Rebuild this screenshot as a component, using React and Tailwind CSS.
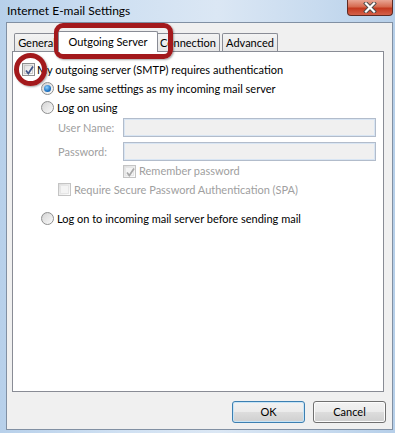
import React from "react";

const font = { fontFamily: 'Lato, "Noto Sans", "Liberation Sans", sans-serif' };

function Checkbox({ checked = false, disabled = false }) {
  return (
    <span
      className={`relative flex h-[13px] w-[13px] shrink-0 items-center justify-center border ${
        disabled ? "border-[#c4c4c4]" : "border-[#8e8f8f]"
      } bg-[linear-gradient(135deg,#dcdcdc,#ffffff)]`}
    >
      <span className={`h-[9px] w-[9px] border ${disabled ? "border-[#e6e6e6] bg-[#f4f4f4]" : "border-[#c9c9c9] bg-[linear-gradient(135deg,#e1e1e1,#fafafa)]"}`} />
      {checked && (
        <svg className="absolute left-[1px] top-[1px]" width="11" height="11" viewBox="0 0 11 11">
          <path
            d="M2 5.5 L4.3 8.5 L9 1.5"
            fill="none"
            stroke={disabled ? "#a8a8a8" : "#3f5488"}
            strokeWidth="1.7"
          />
        </svg>
      )}
    </span>
  );
}

function Radio({ checked = false }) {
  return (
    <span className="relative flex h-[13px] w-[13px] shrink-0 items-center justify-center rounded-full border border-[#8e8f8f] bg-[linear-gradient(135deg,#cfcfcf,#ffffff)]">
      {checked ? (
        <span className="h-[7px] w-[7px] rounded-full bg-[radial-gradient(circle_at_40%_35%,#8fd3ff,#1f74c4_60%,#0f4c8f)]" />
      ) : (
        <span className="h-[9px] w-[9px] rounded-full bg-[linear-gradient(135deg,#d8d8d8,#f6f6f6)]" />
      )}
    </span>
  );
}

function Field() {
  return (
    <div className="h-[19px] w-[253px] shrink-0 border border-[#b2bccb] bg-[#f0f0f0] shadow-[inset_0_0_0_1px_#d8e5f3]" />
  );
}

function Tab({ label, selected = false, w }) {
  if (selected) {
    return (
      <div
        className={`relative z-10 -mx-[2px] -mb-[1px] flex h-[21px] ${w} items-start justify-center whitespace-nowrap rounded-t-[2px] border border-b-0 border-[#898c95] bg-white pt-[3px] text-black`}
      >
        {label}
      </div>
    );
  }
  return (
    <div
      className={`flex h-[18px] ${w} items-start justify-center whitespace-nowrap rounded-t-[2px] border border-b-0 border-[#898c95] bg-[linear-gradient(#f3f3f3,#e6e6e6)] pt-[2px] text-black`}
    >
      {label}
    </div>
  );
}

function Button({ children, focused = false }) {
  return (
    <div
      className={`flex h-[22px] w-[73px] items-center justify-center rounded-[3px] border ${
        focused ? "border-[#3c7fb1] shadow-[inset_0_0_0_1px_#c6e4f7]" : "border-[#707070] shadow-[inset_0_0_0_1px_#fcfcfc]"
      } bg-[linear-gradient(#f2f2f2_0%,#ebebeb_50%,#dddddd_51%,#cfcfcf_100%)] text-black`}
    >
      {children}
    </div>
  );
}

export default function App() {
  return (
    <div
      className="relative h-[433px] w-[395px] overflow-hidden bg-[linear-gradient(90deg,#b7d0ea_0%,#cfe0f2_30%,#dbe7f4_55%,#c8dbef_80%,#b6cfe9_100%)] text-[11px] leading-[14px]"
      style={font}
    >
      {/* title bar */}
      <div className="flex h-[22px] items-center pl-[7px] text-[12px] text-black">Internet E-mail Settings</div>

      {/* close button */}
      <div className="absolute right-[2px] top-0 flex h-[16px] w-[46px] items-center justify-center rounded-b-[4px] border border-t-0 border-[#5f2a22] bg-[linear-gradient(#e9a594_0%,#d66a50_45%,#c4391f_55%,#d4614a_100%)]">
        <svg width="14" height="11" viewBox="0 0 14 11">
          <path d="M3 1.5 L11 9.5 M11 1.5 L3 9.5" stroke="#4a4a4a" strokeWidth="4" strokeLinecap="square" />
          <path d="M3 1.5 L11 9.5 M11 1.5 L3 9.5" stroke="#ffffff" strokeWidth="2.2" strokeLinecap="square" />
        </svg>
      </div>

      {/* client area */}
      <div className="ml-[6px] h-[408px] w-[387px] border border-[#8190a3] bg-[#f0f0f0] px-[5px] pt-[8px]">
        <div className="flex h-[20px] items-end pl-[2px]">
          <Tab label="General" w="w-[46px]" />
          <Tab label="Outgoing Server" w="w-[100px]" selected />
          <Tab label="Connection" w="w-[64px]" />
          <div className="w-[2px]" />
          <Tab label="Advanced" w="w-[56px]" />
        </div>

        {/* panel */}
        <div className="flex h-[341px] w-[372px] flex-col whitespace-nowrap border border-[#898c95] bg-white pl-[9px] pt-[8px] text-black">
          <div className="flex h-[19px] items-center gap-[2px]">
            <Checkbox checked />
            <span>My outgoing server (SMTP) requires authentication</span>
          </div>
          <div className="flex h-[19px] items-center gap-[3px] pl-[19px]">
            <Radio checked />
            <span>Use same settings as my incoming mail server</span>
          </div>
          <div className="flex h-[19px] items-center gap-[3px] pl-[19px]">
            <Radio />
            <span>Log on using</span>
          </div>
          <div className="mt-[1px] flex h-[19px] items-center pl-[36px] text-[#a0a0a0]">
            <span className="w-[65px]">User Name:</span>
            <Field />
          </div>
          <div className="mt-[5px] flex h-[19px] items-center pl-[36px] text-[#a0a0a0]">
            <span className="w-[65px]">Password:</span>
            <Field />
          </div>
          <div className="mt-[1px] flex h-[18px] items-center gap-[3px] pl-[101px] text-[#a0a0a0]">
            <Checkbox checked disabled />
            <span>Remember password</span>
          </div>
          <div className="flex h-[19px] items-center gap-[3px] pl-[36px] text-[#a0a0a0]">
            <Checkbox disabled />
            <span>Require Secure Password Authentication (SPA)</span>
          </div>
          <div className="mt-[10px] flex h-[19px] items-center gap-[3px] pl-[19px]">
            <Radio />
            <span>Log on to incoming mail server before sending mail</span>
          </div>
        </div>

        <div className="mt-[9px] flex justify-end gap-[8px] pr-[1px]">
          <Button focused>OK</Button>
          <Button>Cancel</Button>
        </div>
      </div>

      {/* red highlight marks */}
      <div className="absolute left-[54px] top-[23px] h-[36px] w-[119px] rounded-[9px] border-[5px] border-[#a3191c] shadow-[1px_1px_2px_rgba(0,0,0,0.35)]" />
      <div className="absolute left-[14px] top-[53px] h-[33px] w-[33px] rounded-full border-[5px] border-[#a3191c] shadow-[1px_1px_2px_rgba(0,0,0,0.35)]" />
    </div>
  );
}
